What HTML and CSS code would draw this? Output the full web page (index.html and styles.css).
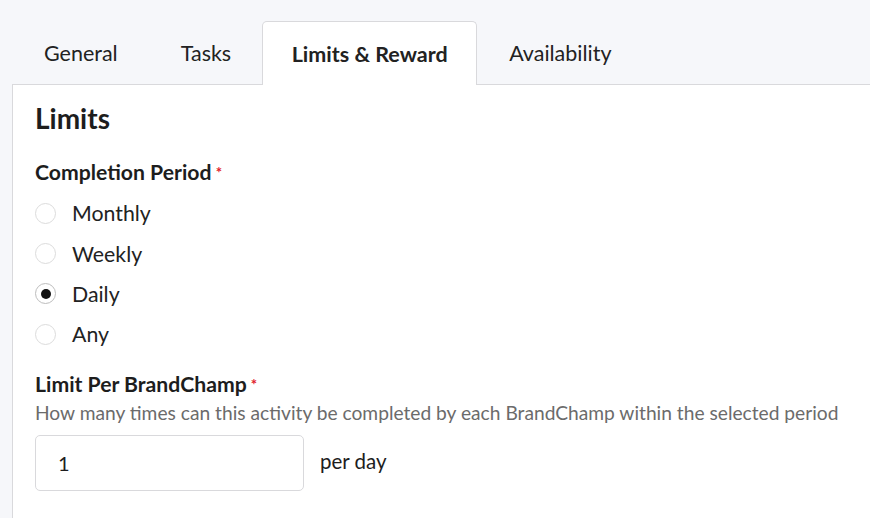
FILE: index.html
```html
<!DOCTYPE html>
<html>
<head>
<meta charset="utf-8">
<link rel="stylesheet" href="styles.css">
</head>
<body>
<div class="page">
  <div class="tabs">
    <div class="tab">General</div>
    <div class="tab">Tasks</div>
    <div class="tab active">Limits &amp; Reward</div>
    <div class="tab">Availability</div>
  </div>
  <div class="panel">
    <h2 class="heading">Limits</h2>
    <div class="label">Completion Period <span class="req">*</span></div>
    <div class="radios">
      <div class="radio-row"><span class="radio"></span><span class="radio-label">Monthly</span></div>
      <div class="radio-row"><span class="radio"></span><span class="radio-label">Weekly</span></div>
      <div class="radio-row"><span class="radio checked"></span><span class="radio-label">Daily</span></div>
      <div class="radio-row"><span class="radio"></span><span class="radio-label">Any</span></div>
    </div>
    <div class="label label2">Limit Per BrandChamp <span class="req">*</span></div>
    <div class="help">How many times can this activity be completed by each BrandChamp within the selected period</div>
    <div class="input-row">
      <div class="input">1</div>
      <span class="suffix">per day</span>
    </div>
  </div>
</div>
</body>
</html>
```
FILE: styles.css
```css
html, body {
  margin: 0;
  padding: 0;
  background: #f6f7fa;
  font-family: Lato, "Open Sans", sans-serif;
  color: #1d1d1d;
}
.page {
  padding: 21px 0 0 12px;
  height: 518px;
  box-sizing: border-box;
  display: flex;
  flex-direction: column;
}
.tabs {
  display: flex;
  align-items: flex-end;
  height: 63px;
}
.tab {
  font-size: 21.5px;
  height: 63px;
  display: flex;
  align-items: center;
  padding: 0 31px 0 32px;
  color: #222;
  box-sizing: border-box;
}
.tab.active {
  background: #fff;
  font-weight: 700;
  border: 1px solid #d9d9dc;
  border-bottom: none;
  border-radius: 5px 5px 0 0;
  height: 64px;
  margin-bottom: -1px;
  position: relative;
  z-index: 1;
  padding: 0 28.5px 0 28.5px;
}
.panel {
  flex: 1;
  background: #fff;
  border-top: 1px solid #d9d9dc;
  border-left: 1px solid #d9d9dc;
  padding: 17px 0 0 22px;
}
.heading {
  margin: 0;
  font-size: 28px;
  font-weight: 700;
  line-height: 32px;
  color: #1d1d1d;
}
.label {
  font-size: 21.2px;
  font-weight: 700;
  margin-top: 26px;
  line-height: 24px;
}
.req {
  color: #e0202a;
  font-size: 15px;
  vertical-align: top;
  margin-left: -1px;
}
.radios {
  margin-top: 9px;
  display: flex;
  flex-direction: column;
}
.radio-row {
  display: flex;
  align-items: center;
  height: 40.4px;
}
.radio {
  width: 21px;
  height: 21px;
  border: 1.5px solid #dcdcdc;
  border-radius: 50%;
  box-sizing: border-box;
  margin-right: 16px;
  display: flex;
  align-items: center;
  justify-content: center;
}
.radio.checked {
  border-color: #bdbdbd;
}
.radio.checked::after {
  content: "";
  width: 10px;
  height: 10px;
  border-radius: 50%;
  background: #111;
}
.radio-label {
  font-size: 21.3px;
  color: #222;
}
.label2 { margin-top: 17px; }
.help {
  font-size: 19.2px;
  color: #6b6b6b;
  margin-top: 6px;
  line-height: 22px;
}
.input-row {
  display: flex;
  align-items: center;
  margin-top: 11px;
}
.input {
  width: 269px;
  height: 56px;
  box-sizing: border-box;
  border: 1px solid #d9d9dc;
  border-radius: 5px;
  padding-left: 22px;
  font-size: 20px;
  display: flex;
  align-items: center;
}
.suffix {
  font-size: 20.5px;
  margin-left: 16px;
  margin-bottom: 3px;
}
```
